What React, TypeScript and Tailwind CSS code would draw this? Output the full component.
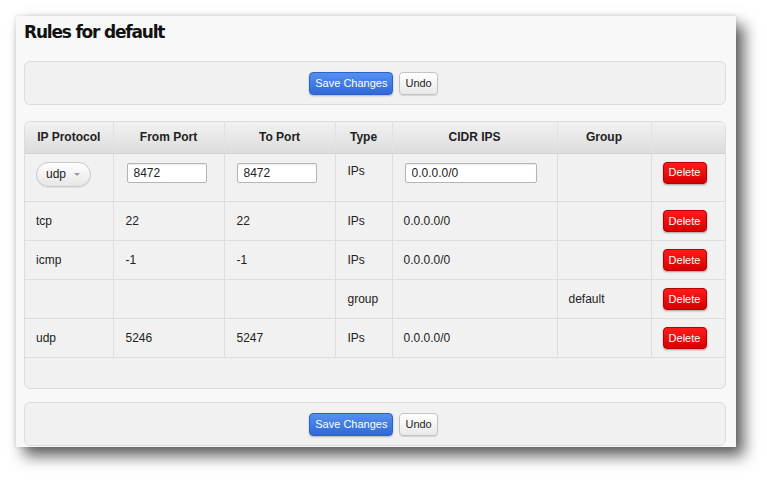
import { useState } from 'react';

type Rule = {
  protocol: string;
  fromPort: string;
  toPort: string;
  type: string;
  cidr: string;
  group: string;
};

const savedRules: Rule[] = [
  { protocol: 'tcp', fromPort: '22', toPort: '22', type: 'IPs', cidr: '0.0.0.0/0', group: '' },
  { protocol: 'icmp', fromPort: '-1', toPort: '-1', type: 'IPs', cidr: '0.0.0.0/0', group: '' },
  { protocol: '', fromPort: '', toPort: '', type: 'group', cidr: '', group: 'default' },
  { protocol: 'udp', fromPort: '5246', toPort: '5247', type: 'IPs', cidr: '0.0.0.0/0', group: '' },
];

const headers = ['IP Protocol', 'From Port', 'To Port', 'Type', 'CIDR IPS', 'Group', ''];

function ActionBar() {
  return (
    <div className="flex h-[44px] items-center justify-center gap-[6px] rounded-md border border-[#dcdcdc] bg-[#f1f1f1] pr-[3px]">
      <button
        type="button"
        className="h-[23px] rounded-[4px] border border-[#2d61c9] bg-gradient-to-b from-[#5590f0] to-[#2f68d8] px-[5px] text-[11px] text-white shadow-[0_1px_2px_rgba(0,0,0,0.25)]"
      >
        Save Changes
      </button>
      <button
        type="button"
        className="h-[23px] rounded-[4px] border border-[#c4c4c4] bg-gradient-to-b from-white to-[#e9e9e9] px-[5px] text-[11px] text-[#222] shadow-[0_1px_1px_rgba(0,0,0,0.12)]"
      >
        Undo
      </button>
    </div>
  );
}

function DeleteButton() {
  return (
    <button
      type="button"
      className="h-[22px] w-[44px] rounded-[4px] border border-[#b80000] bg-gradient-to-b from-[#ff1a1a] to-[#d80000] text-[11px] text-white shadow-[0_1px_2px_rgba(0,0,0,0.35)]"
    >
      Delete
    </button>
  );
}

export default function App() {
  const [fromPort, setFromPort] = useState('8472');
  const [toPort, setToPort] = useState('8472');
  const [cidr, setCidr] = useState('0.0.0.0/0');

  const cell = 'border-r border-b border-[#dedede] px-[12px] text-left';

  return (
    <div className="min-h-screen bg-white pl-4 pt-4 font-['Liberation_Sans',Arial,sans-serif] text-[12px] text-[#222]">
      <div className="h-[431px] w-[720px] overflow-hidden bg-[#f8f8f8] pl-2 pr-[10px] pt-[4px] shadow-[8px_9px_14px_rgba(0,0,0,0.62),0_0_5px_rgba(0,0,0,0.15)]">
        <h1 className="mb-[17px] font-['DejaVu_Sans',sans-serif] text-[17px] font-bold leading-6 text-[#111] [letter-spacing:-1.2px]">
          Rules for default
        </h1>

        <ActionBar />

        <div className="mt-4 h-[268px] overflow-hidden rounded-md border border-[#dcdcdc] bg-[#f1f1f1]">
          <table className="w-full table-fixed border-collapse">
            <colgroup>
              <col className="w-[88px]" />
              <col className="w-[111px]" />
              <col className="w-[111px]" />
              <col className="w-[57px]" />
              <col className="w-[165px]" />
              <col className="w-[94px]" />
              <col />
            </colgroup>
            <thead>
              <tr className="h-[31px] bg-gradient-to-b from-[#f2f2f2] to-[#dcdcdc]">
                {headers.map((h, i) => (
                  <th
                    key={i}
                    className={`border-b border-[#d2d2d2] text-center text-[12px] font-bold ${
                      i < headers.length - 1 ? 'border-r border-r-[#e2e2e2]' : ''
                    }`}
                  >
                    {h}
                  </th>
                ))}
              </tr>
            </thead>
            <tbody>
              <tr className="h-[48px]">
                <td className={`${cell} align-top pl-[11px] pt-[8px]`}>
                  <div className="flex h-[25px] w-[55px] items-center justify-between rounded-full border border-[#c8c8c8] bg-gradient-to-b from-white to-[#e6e6e6] pl-[9px] pr-[10px] shadow-[0_1px_1px_rgba(0,0,0,0.08)]">
                    <span>udp</span>
                    <span className="h-0 w-0 border-x-[3px] border-t-[3px] border-x-transparent border-t-[#999]" />
                  </div>
                </td>
                <td className={`${cell} align-top pl-[13px] pt-[9px]`}>
                  <input
                    value={fromPort}
                    onChange={(e) => setFromPort(e.target.value)}
                    className="h-[20px] w-[80px] rounded-[2px] border border-[#b5b5b5] bg-white px-[6px] text-[12px] shadow-[inset_0_1px_1px_rgba(0,0,0,0.08)] outline-none"
                  />
                </td>
                <td className={`${cell} align-top pl-[12px] pt-[9px]`}>
                  <input
                    value={toPort}
                    onChange={(e) => setToPort(e.target.value)}
                    className="h-[20px] w-[80px] rounded-[2px] border border-[#b5b5b5] bg-white px-[6px] text-[12px] shadow-[inset_0_1px_1px_rgba(0,0,0,0.08)] outline-none"
                  />
                </td>
                <td className={`${cell} align-top pt-[8px]`}>IPs</td>
                <td className={`${cell} align-top pl-[12px] pt-[9px]`}>
                  <input
                    value={cidr}
                    onChange={(e) => setCidr(e.target.value)}
                    className="h-[20px] w-[132px] rounded-[2px] border border-[#b5b5b5] bg-white px-[6px] text-[12px] shadow-[inset_0_1px_1px_rgba(0,0,0,0.08)] outline-none"
                  />
                </td>
                <td className={cell} />
                <td className="border-b border-[#dedede] px-[11px] pt-[8px] align-top">
                  <DeleteButton />
                </td>
              </tr>
              {savedRules.map((r, i) => (
                <tr key={i} className="h-[39px]">
                  <td className={`${cell} pl-[11px]`}>{r.protocol}</td>
                  <td className={`${cell} pl-[12px]`}>{r.fromPort}</td>
                  <td className={`${cell} pl-[12px]`}>{r.toPort}</td>
                  <td className={cell}>{r.type}</td>
                  <td className={`${cell} pl-[11px]`}>{r.cidr}</td>
                  <td className={`${cell} pl-[11px]`}>{r.group}</td>
                  <td className="border-b border-[#dedede] px-[11px] pt-[1px]">
                    <DeleteButton />
                  </td>
                </tr>
              ))}
            </tbody>
          </table>
        </div>

        <div className="mt-[13px]">
          <ActionBar />
        </div>
      </div>
    </div>
  );
}
